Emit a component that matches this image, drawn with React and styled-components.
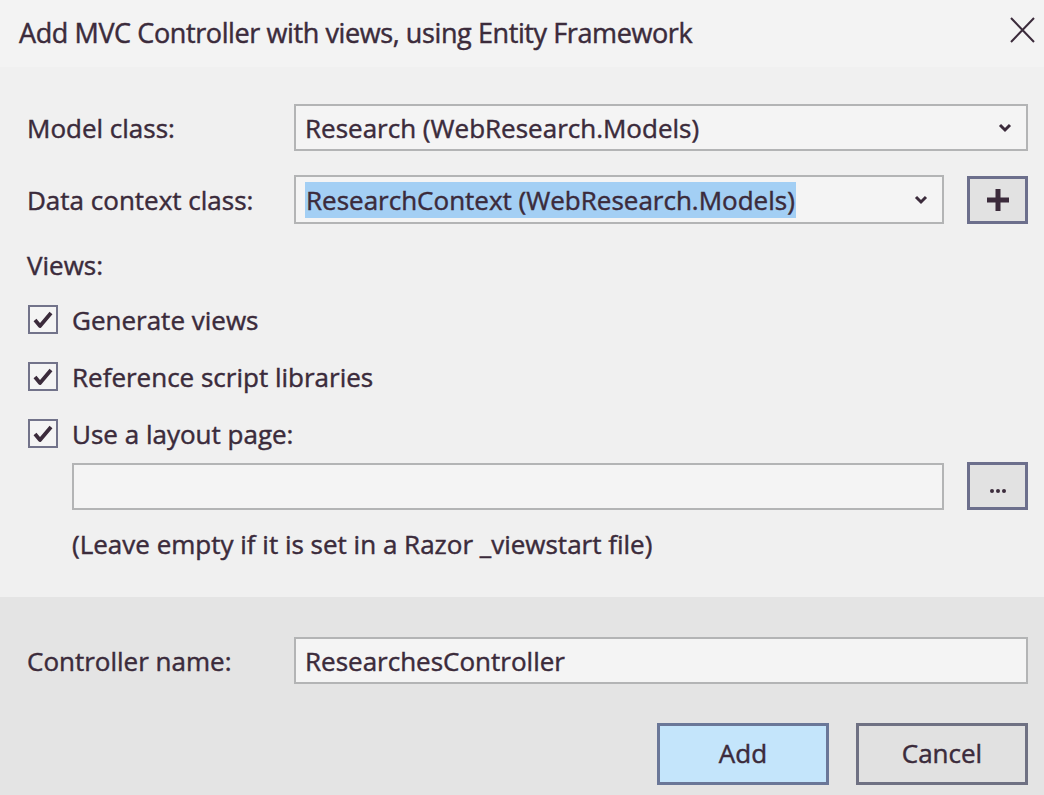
import React from 'react'
import styled, { createGlobalStyle } from "styled-components";

const GlobalStyle = createGlobalStyle`
  html, body {
    margin: 0;
    padding: 0;
    background: #f0f0f0;
  }
  body {
    font-family: "Open Sans", "Noto Sans", sans-serif;
    color: #3b2b3b;
    -webkit-text-stroke: 0.45px #3b2b3b;
  }
`;

const Dialog = styled.div`
  width: 1044px;
  height: 795px;
  display: flex;
  flex-direction: column;
  overflow: hidden;
`;

const TitleBar = styled.header`
  height: 67px;
  background: #f3f3f3;
  display: flex;
  align-items: center;
  justify-content: space-between;
  padding: 0 6px 0 19px;
`;

const Title = styled.h1`
  margin: 0;
  font-size: 27px;
  font-weight: 400;
  letter-spacing: -0.4px;
  padding-bottom: 2px;
`;

const CloseButton = styled.button`
  width: 32px;
  height: 32px;
  border: 0;
  background: transparent;
  padding: 0;
  margin-bottom: 8px;
  display: flex;
  align-items: center;
  justify-content: center;
`;

const Body = styled.section`
  flex: 1;
  background: #f0f0f0;
  padding: 37px 16px 0 27px;
  display: flex;
  flex-direction: column;
`;

const FormRow = styled.div`
  display: flex;
  align-items: center;
  margin-bottom: ${(p) => p.$gap || 0}px;
`;

const Label = styled.label`
  width: 267px;
  flex: none;
  font-size: 26px;
`;

const Text = styled.div`
  font-size: 26px;
  line-height: 34px;
  margin-left: ${(p) => p.$indent || 0}px;
`;

const Field = styled.div`
  flex: 1;
  height: ${(p) => p.$h || 47}px;
  box-sizing: border-box;
  border: 2px solid #b3b4b5;
  background: #f4f4f4;
  display: flex;
  align-items: center;
  padding: 0 12px 0 5px;
  font-size: 26px;
  margin-left: ${(p) => p.$indent || 0}px;
`;

const Selected = styled.span`
  background: #a3cff4;
  line-height: 34px;
  padding: 0 1px;
`;

const Value = styled.span`
  flex: 1;
  padding-left: 4px;
  white-space: nowrap;
`;

const Chevron = styled.svg`
  width: 14px;
  height: 10px;
  flex: none;
  margin-right: 2px;
`;

const SquareButton = styled.button`
  width: 61px;
  height: 48px;
  margin-left: 23px;
  flex: none;
  box-sizing: border-box;
  border: 3px solid #6c6f8c;
  background: #e2e2e2;
  padding: 0;
  display: flex;
  align-items: center;
  justify-content: center;
`;

const CheckList = styled.div`
  display: flex;
  flex-direction: column;
  margin-top: 9px;
`;

const CheckRow = styled.label`
  height: 57px;
  display: flex;
  align-items: center;
  gap: 14px;
  padding-left: 1px;
`;

const Box = styled.span`
  width: 30px;
  height: 29px;
  box-sizing: border-box;
  border: 2px solid #72738a;
  background: #f4f4f4;
  display: flex;
  align-items: center;
  justify-content: center;
  flex: none;
`;

const Hint = styled(Text)`
  margin-top: 17px;
`;

const Footer = styled.footer`
  height: 198px;
  background: #e4e4e4;
  box-sizing: border-box;
  padding: 40px 16px 0 27px;
  display: flex;
  flex-direction: column;
`;

const Buttons = styled.div`
  display: flex;
  justify-content: flex-end;
  gap: 27px;
  margin-top: 39px;
`;

const DialogButton = styled.button`
  width: 172px;
  height: 62px;
  box-sizing: border-box;
  border: 3px solid ${(p) => (p.$primary ? "#6a7798" : "#6f7183")};
  background: ${(p) => (p.$primary ? "#c4e5fb" : "#e1e1e1")};
  font-family: "Open Sans", "Noto Sans", sans-serif;
  font-size: 26px;
  color: #3b2b3b;
  -webkit-text-stroke: 0.45px #3b2b3b;
  padding: 0 0 2px;
`;

const ChevronIcon = () => (
  <Chevron viewBox="0 0 14 10">
    <polyline points="2,2 7,7 12,2" fill="none" stroke="#3b2b3b" strokeWidth="3" />
  </Chevron>
);

const CheckMark = () => (
  <svg width="22" height="20" viewBox="0 0 22 20">
    <polyline points="3,10 8,16 19,3" fill="none" stroke="#3b2b3b" strokeWidth="3.8" strokeLinejoin="round" />
  </svg>
);

const Check = ({ children }) => (
  <CheckRow>
    <Box><CheckMark /></Box>
    <Text>{children}</Text>
  </CheckRow>
);

const App = () => (
  <Dialog>
    <GlobalStyle />
    <TitleBar>
      <Title>Add MVC Controller with views, using Entity Framework</Title>
      <CloseButton aria-label="Close">
        <svg width="25" height="26" viewBox="0 0 25 26">
          <path d="M1 1 L24 25 M24 1 L1 25" stroke="#3b2b3b" strokeWidth="2" fill="none" />
        </svg>
      </CloseButton>
    </TitleBar>
    <Body>
      <FormRow $gap={24}>
        <Label>Model class:</Label>
        <Field>
          <Value>Research (WebResearch.Models)</Value>
          <ChevronIcon />
        </Field>
      </FormRow>
      <FormRow>
        <Label>Data context class:</Label>
        <Field $h={49}>
          <Value><Selected>ResearchContext (WebResearch.Models)</Selected></Value>
          <ChevronIcon />
        </Field>
        <SquareButton aria-label="Add data context">
          <svg width="24" height="24" viewBox="0 0 24 24">
            <path d="M12 1 V23 M1 12 H23" stroke="#3b2b3b" strokeWidth="5" fill="none" />
          </svg>
        </SquareButton>
      </FormRow>
      <Text style={{ marginTop: 24 }}>Views:</Text>
      <CheckList>
        <Check>Generate views</Check>
        <Check>Reference script libraries</Check>
        <Check>Use a layout page:</Check>
      </CheckList>
      <FormRow>
        <Field $indent={45} />
        <SquareButton aria-label="Browse">
          <svg width="20" height="16" viewBox="0 0 20 16">
            <circle cx="4" cy="13" r="2" fill="#3b2b3b" />
            <circle cx="10" cy="13" r="2" fill="#3b2b3b" />
            <circle cx="16" cy="13" r="2" fill="#3b2b3b" />
          </svg>
        </SquareButton>
      </FormRow>
      <Hint $indent={45}>(Leave empty if it is set in a Razor _viewstart file)</Hint>
    </Body>
    <Footer>
      <FormRow>
        <Label>Controller name:</Label>
        <Field>
          <Value>ResearchesController</Value>
        </Field>
      </FormRow>
      <Buttons>
        <DialogButton $primary>Add</DialogButton>
        <DialogButton>Cancel</DialogButton>
      </Buttons>
    </Footer>
  </Dialog>
);

export default App;
